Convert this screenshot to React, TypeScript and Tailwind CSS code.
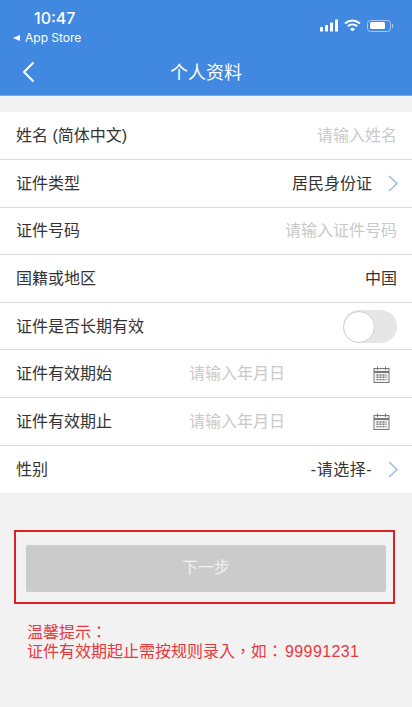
const font = { fontFamily: '"Liberation Sans", "Noto Sans CJK SC", sans-serif' };

function CalendarIcon() {
  return (
    <svg width="17" height="17" viewBox="0 0 17 17" fill="none" stroke="#777">
      <rect x="1" y="2.500" width="15" height="14" fill="#f4f4f4" strokeWidth="1" />
      <path d="M1 6h15" strokeWidth="2" />
      <path d="M4.500 0.500v3.500M12.500 0.500v3.500" strokeWidth="1" />
      <path d="M3.500 9h10M3.500 11.300h10M3.500 13.600h10" strokeWidth="1.400" strokeDasharray="2 1" />
    </svg>
  );
}

function Row({ label, children, last }: { label: string; children?: React.ReactNode; last?: boolean }) {
  return (
    <div className={`flex h-[47.6px] items-center justify-between pl-4 pr-[15px] pt-[1px] ${last ? "" : "border-b border-[#d9d9d9]"}`}>
      <span className="text-[16px] text-[#333333]">{label}</span>
      {children}
    </div>
  );
}

function Placeholder({ text }: { text: string }) {
  return <span className="text-[16px] text-[#c9c9c9]">{text}</span>;
}

function DateField() {
  return (
    <div className="flex w-[208px] items-center justify-between pr-[7px]">
      <Placeholder text="请输入年月日" />
      <CalendarIcon />
    </div>
  );
}

function Arrow() {
  return (
    <svg className="ml-[16px] -mr-[1px]" width="10" height="17" viewBox="0 0 10 17" fill="none" stroke="#8fb8e8" strokeWidth="1.300">
      <path d="M1 1l8 7.500-8 7.500" />
    </svg>
  );
}

export default function App() {
  return (
    <div className="flex h-[707px] w-[412px] flex-col overflow-hidden bg-[#f2f2f2]" style={font}>
      <header className="h-[96px] border-b border-[#7aa9e6] bg-[#4088e0] text-white">
        <div className="flex h-[50px] justify-between pl-[13px] pr-[19px]">
          <div className="pt-[9px]">
            <div className="pl-[21px] text-[16px] leading-[18px] font-medium" style={{ fontFamily: "Inter, sans-serif" }}>10:47</div>
            <div className="mt-[3px] flex items-center text-[12px] leading-[15px]" style={{ fontFamily: "Inter, sans-serif" }}>
              <span className="mr-[5px] h-0 w-0 border-y-[3.500px] border-r-[7px] border-y-transparent border-r-white" />
              App Store
            </div>
          </div>
          <div className="flex items-center gap-[6px] pt-[1px]">
            <svg width="18" height="13" viewBox="0 0 18 13" fill="#fff">
              <rect x="0" y="8" width="3" height="4.500" rx="0.500" />
              <rect x="5" y="6" width="3" height="6.500" rx="0.500" />
              <rect x="10" y="3.500" width="3" height="9" rx="0.500" />
              <rect x="15" y="0.500" width="3" height="12" rx="0.500" />
            </svg>
            <svg width="17" height="13" viewBox="0 0 17 13" fill="none" stroke="#fff" strokeWidth="2">
              <path d="M1 4.500C5.500 0.500 11.500 0.500 16 4.500" />
              <path d="M3.800 7.300C6.500 5 10.500 5 13.200 7.300" />
              <path d="M6.500 10C7.600 9 9.400 9 10.500 10L8.500 12Z" fill="#fff" strokeWidth="1" />
            </svg>
            <div className="flex items-center">
              <div className="flex h-[12px] w-[24px] items-center rounded-[3.500px] border border-[#a9c9f0] p-[1.500px]">
                <div className="h-full w-[15px] rounded-[1.500px] bg-white" />
              </div>
              <div className="ml-[1px] h-[4px] w-[1px] bg-[#a9c9f0]" />
            </div>
          </div>
        </div>
        <div className="relative flex h-[45px] items-center justify-center pt-[1px]">
          <svg className="absolute left-[22px] top-[11px]" width="13" height="22" viewBox="0 0 13 22" fill="none" stroke="#fff" strokeWidth="2">
            <path d="M11.500 1.500L2 11l9.500 9.500" />
          </svg>
          <span className="text-[18px]">个人资料</span>
        </div>
      </header>

      <section className="mt-[16.400px] bg-white">
        <Row label="姓名 (简体中文)"><Placeholder text="请输入姓名" /></Row>
        <Row label="证件类型">
          <div className="flex items-center">
            <span className="text-[16px] text-[#333333]">居民身份证</span>
            <Arrow />
          </div>
        </Row>
        <Row label="证件号码"><Placeholder text="请输入证件号码" /></Row>
        <Row label="国籍或地区"><span className="text-[16px] text-[#333333]">中国</span></Row>
        <Row label="证件是否长期有效">
          <div className="flex h-[33px] w-[54px] items-center rounded-full bg-[#e6e6e6]">
            <div className="h-[32px] w-[32px] rounded-full border border-[#cfcfcf] bg-white" />
          </div>
        </Row>
        <Row label="证件有效期始"><DateField /></Row>
        <Row label="证件有效期止"><DateField /></Row>
        <Row label="性别" last>
          <div className="flex items-center">
            <span className="text-[16px] tracking-[0.5px] text-[#333333]">-请选择-</span>
            <Arrow />
          </div>
        </Row>
      </section>

      <div className="mx-[14px] mt-[36.500px] h-[74px] w-[381px] border-2 border-[#dd1f26] pl-[10px] pr-[7px] pt-[13px]">
        <button className="flex h-[47px] w-full items-center justify-center rounded-[2px] bg-[#cbcbcb] text-[16px] text-[#f1f1f1]">
          下一步
        </button>
      </div>

      <p className="mt-[19px] pl-[27px] text-[16px] leading-[19px] text-[#e8383d]" style={{ fontFamily: '"Liberation Sans", "Noto Sans CJK TC", sans-serif' }}>
        温馨提示：
        <br />
        证件有效期起止需按规则录入，如：<span className="ml-[2px] tracking-[0.4px]">99991231</span>
      </p>
    </div>
  );
}
